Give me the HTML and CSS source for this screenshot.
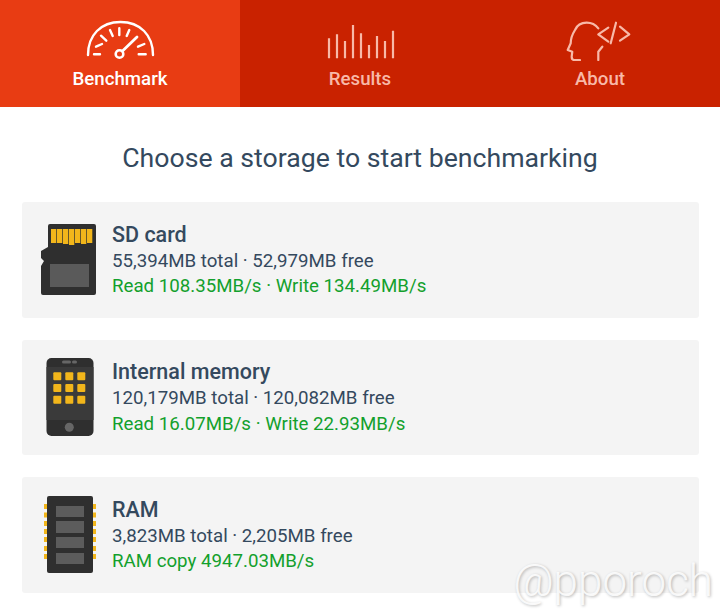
FILE: index.html
```html
<!DOCTYPE html>
<html lang="en">
<head>
  <meta charset="UTF-8">
  <title>Storage benchmark</title>
  <link rel="stylesheet" href="styles.css">
</head>
<body>
  <div class="tabs">
    <div class="tab active">
      <svg class="tab-icon" width="70" height="42" viewBox="0 0 70 42" fill="none" stroke="#fff" stroke-width="2.400" stroke-linecap="round">
        <path d="M3 36 C3 16 16 3 35.500 3 C55 3 68 16 68 36" />
        <path d="M9 35.300H15M11 27.700L17 25M16 16.700L21.300 21.700M25 11L27.700 17M34.300 9.300V16M44.300 11L41.700 17M59.300 25L53 27.700M60.700 35.300H53.700" />
        <circle cx="34.500" cy="35" r="3.800" stroke-width="2.600" />
        <path d="M37.500 32L52 18" stroke-width="2.800" />
      </svg>
      <span>Benchmark</span>
    </div>
    <div class="tab">
      <svg class="tab-icon" width="70" height="42" viewBox="0 0 70 42" fill="none" stroke="#f8b9a8" stroke-width="2.200">
        <path d="M4 19.300V39.300M12 15.300V39.300M20 22V39.300M28 6V39.300M36 14.300V39.300M44 26V39.300M52 17V39.300M60 22V39.300M68 11.700V39.300" />
      </svg>
      <span>Results</span>
    </div>
    <div class="tab">
      <svg class="tab-icon" width="70" height="42" viewBox="0 0 70 42" fill="none" stroke="#f8b9a8" stroke-width="2.200" stroke-linecap="round" stroke-linejoin="round">
        <path d="M33.300 9.300 C30 5 26 3.700 21.700 3.700 C15 3.700 11.500 7.500 10 11 C7.500 15 5.700 19 5.700 24.300 L2.700 31 L7.300 32.700 L6.700 37.700 C6.700 40 7.500 41 9.300 41 H15" />
        <path d="M33.300 41 V32.700 L37.300 27.700" />
        <path d="M43.300 8.700L33.300 15.300L43.300 22.700M51 3.700L45.700 24.300M55 7.700L64.300 15.300L55 21.700" />
      </svg>
      <span>About</span>
    </div>
  </div>

  <h1 class="heading">Choose a storage to start benchmarking</h1>

  <div class="list">
    <div class="card">
      <svg class="card-icon" width="56" height="72" viewBox="0 0 56 72">
        <path d="M8 2a2 2 0 0 1 2-2H54a2 2 0 0 1 2 2V69a2 2 0 0 1-2 2H3a2 2 0 0 1-2-2V42l3-5-3-3V27l7-4Z" fill="#2f2f2f" />
        <g fill="#f2b61b">
          <rect x="11" y="5" width="5.300" height="14" /><rect x="17" y="5" width="5.300" height="14" /><rect x="23" y="5" width="5.300" height="15" /><rect x="29" y="5" width="5.300" height="16" /><rect x="35" y="5" width="5.300" height="14" /><rect x="41" y="5" width="5.300" height="15" /><rect x="47" y="5" width="5.300" height="14" />
        </g>
        <rect x="10" y="40" width="39" height="23" fill="#5a5a5a" />
      </svg>
      <div class="card-text">
        <div class="card-title">SD card</div>
        <div class="card-line">55,394MB total · 52,979MB free</div>
        <div class="card-speed">Read 108.35MB/s · Write 134.49MB/s</div>
      </div>
    </div>

    <div class="card">
      <svg class="card-icon" width="56" height="78" viewBox="0 0 56 78">
        <rect x="6.500" y="0" width="47" height="78" rx="5" fill="#2f2f2f" />
        <path d="M6.500 9h47v53h-47z" fill="#3a3a3a" />
        <rect x="22" y="2.500" width="9" height="3" rx="1.500" fill="#666" />
        <rect x="32" y="2.500" width="5" height="3" rx="1.500" fill="#666" />
        <g fill="#f2b61b">
          <rect x="13.300" y="14.300" width="8" height="8" rx="1" /><rect x="25.300" y="14.300" width="8" height="8" rx="1" /><rect x="37.300" y="14.300" width="8" height="8" rx="1" />
          <rect x="13.300" y="26" width="8" height="8" rx="1" /><rect x="25.300" y="26" width="8" height="8" rx="1" /><rect x="37.300" y="26" width="8" height="8" rx="1" />
          <rect x="13.300" y="37.700" width="8" height="8" rx="1" /><rect x="25.300" y="37.700" width="8" height="8" rx="1" /><rect x="37.300" y="37.700" width="8" height="8" rx="1" />
        </g>
        <circle cx="29.300" cy="69.300" r="4.500" fill="#666" />
      </svg>
      <div class="card-text">
        <div class="card-title">Internal memory</div>
        <div class="card-line">120,179MB total · 120,082MB free</div>
        <div class="card-speed">Read 16.07MB/s · Write 22.93MB/s</div>
      </div>
    </div>

    <div class="card">
      <svg class="card-icon" width="56" height="78" viewBox="0 0 56 78">
        <g fill="#f2b61b">
          <rect x="4" y="8" width="4" height="5" /><rect x="4" y="16.500" width="4" height="5" /><rect x="4" y="25" width="4" height="5" /><rect x="4" y="33" width="4" height="5" /><rect x="4" y="41" width="4" height="5" /><rect x="4" y="50" width="4" height="5" /><rect x="4" y="58" width="4" height="5" />
          <rect x="52" y="8" width="4" height="5" /><rect x="52" y="16.500" width="4" height="5" /><rect x="52" y="25" width="4" height="5" /><rect x="52" y="33" width="4" height="5" /><rect x="52" y="41" width="4" height="5" /><rect x="52" y="50" width="4" height="5" /><rect x="52" y="58" width="4" height="5" />
        </g>
        <rect x="7" y="0" width="46" height="77" rx="2" fill="#2f2f2f" />
        <g fill="#5c5c5c">
          <rect x="16" y="10" width="28" height="11" /><rect x="16" y="25" width="28" height="12" /><rect x="16" y="41" width="28" height="11" /><rect x="16" y="57" width="28" height="11" />
        </g>
      </svg>
      <div class="card-text">
        <div class="card-title">RAM</div>
        <div class="card-line">3,823MB total · 2,205MB free</div>
        <div class="card-speed">RAM copy 4947.03MB/s</div>
      </div>
    </div>
  </div>

  <div class="watermark">@pporoch</div>
</body>
</html>
```

FILE: styles.css
```css
body {
  font-family: 'Roboto', sans-serif;
  background: white;
  margin: 0;
  height: 613px;
  overflow: hidden;
  position: relative;
}

.tabs {
  display: flex;
  height: 107px;
  background: #c92200;
}

.tab {
  flex: 1;
  display: flex;
  flex-direction: column;
  align-items: center;
  padding-top: 19px;
  color: #f8b9a8;
  font-size: 18.7px;
  line-height: 21px;
  font-weight: 500;
}

.tab.active {
  background: #e83c13;
  color: white;
}

.tab-icon {
  margin-bottom: 8px;
}

.heading {
  margin: 35px 0 28px;
  text-align: center;
  font-size: 26.67px;
  line-height: 32px;
  font-weight: 400;
  color: #34495e;
}

.list {
  display: flex;
  flex-direction: column;
  gap: 22px;
  margin: 0 21px 0 22px;
}

.card {
  display: flex;
  align-items: center;
  height: 115.5px;
  background: #f4f4f4;
  border-radius: 3px;
}

.card-icon {
  margin-left: 18px;
  margin-right: 16px;
}

.card-text {
  padding-top: 2px;
}

.card-title {
  font-size: 21.5px;
  line-height: 25px;
  margin-bottom: 2px;
  font-weight: 500;
  color: #34495e;
}

.card-line,
.card-speed {
  font-size: 18.7px;
  line-height: 25.5px;
  color: #34495e;
}

.card-speed {
  color: #13a02c;
}

/* Photo credit stamped over the corner */
.watermark {
  position: absolute;
  right: 7px;
  bottom: 4px;
  font-size: 44px;
  line-height: 56px;
  font-weight: 300;
  color: rgba(255, 255, 255, 0.85);
  text-shadow: 1px 1px 3px rgba(0, 0, 0, 0.28);
}
```
